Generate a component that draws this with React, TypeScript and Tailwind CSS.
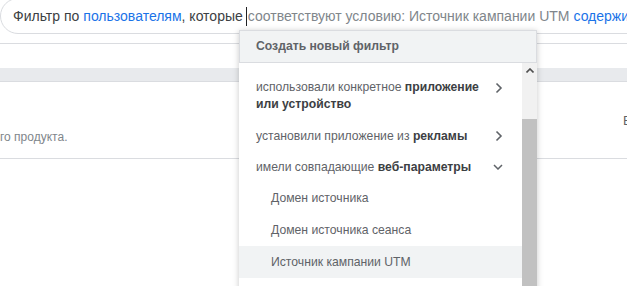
import React from "react";

function ChevronRight() {
  return (
    <svg width="8" height="12" viewBox="0 0 8 12" className="shrink-0">
      <path d="M1.5 1.5 L6 6 L1.5 10.5" fill="none" stroke="#5f6368" strokeWidth="1.6" />
    </svg>
  );
}

function ChevronDown() {
  return (
    <svg width="10" height="6" viewBox="0 0 10 6" className="shrink-0">
      <path d="M1 1 L5 5 L9 1" fill="none" stroke="#5f6368" strokeWidth="1.5" />
    </svg>
  );
}

function MenuItem({
  children,
  icon,
  indent,
  active,
  h = "h-8",
}: {
  children: React.ReactNode;
  icon?: React.ReactNode;
  indent?: boolean;
  active?: boolean;
  h?: string;
}) {
  return (
    <div
      className={`flex ${h} items-center justify-between pr-[19px] text-[12.2px] text-[#5f6368] ${
        indent ? "pl-[32px]" : "pl-[17px]"
      } ${active ? "bg-[#f1f3f4]" : ""}`}
    >
      <span>{children}</span>
      {icon}
    </div>
  );
}

export default function App() {
  return (
    <div
      className="relative h-[286px] w-[627px] overflow-hidden bg-white"
      style={{ fontFamily: '"Liberation Sans", Arial, sans-serif' }}
    >
      {/* search bar */}
      <div className="-mt-[2px] flex h-[36px] w-[760px] items-center whitespace-nowrap rounded-[18px] border border-[#dadce0] pl-[12px] text-[14px]">
        <span className="text-[#3c4043]">Фильтр по </span>
        <span className="ml-[4px] text-[#1a73e8]">пользователям</span>
        <span className="text-[#3c4043]">, которые </span>
        <span className="ml-[3px] mr-[1px] h-[19px] w-px bg-[#202124]" />
        <span className="text-[#80868b]">соответствуют условию: Источник кампании UTM </span>
        <span className="ml-[4px] text-[#1a73e8]">содержит</span>
      </div>

      <div className="mt-[9px] border-t border-[#dadce0]" />

      {/* grey band */}
      <div className="mt-[24px] h-[14px] border-b border-[#dadce0] bg-[#e8eaed]" />

      <div className="flex h-[77px] border-b border-[#dadce0] text-[12px]">
        <span className="pt-[46px] text-[#80868b]">го продукта.</span>
        <span className="ml-auto w-[4px] overflow-hidden pt-[29px] text-[13px] text-[#5f6368]">В</span>
      </div>

      {/* dropdown */}
      <div className="absolute left-[239px] top-[30px] h-[270px] w-[298px] bg-white shadow-[0_1px_6px_rgba(0,0,0,0.22)]">
        <div className="flex h-[33px] items-center border border-[#dadce0] bg-[#f1f3f4] pl-[16px] text-[12.2px] font-bold text-[#5f6368]">
          Создать новый фильтр
        </div>
        <div className="flex">
          <div className="w-[283px] pt-[8px]">
            <div className="flex justify-between pb-[7px] pl-[17px] pr-[19px] pt-[8px] text-[12.2px] leading-[17px] text-[#5f6368]">
              <span>
                использовали конкретное <b className="text-[#3c4043]">приложение</b>
                <br />
                <b className="text-[#3c4043]">или устройство</b>
              </span>
              <span className="pt-[3px]">
                <ChevronRight />
              </span>
            </div>
            <MenuItem icon={<ChevronRight />}>
              установили приложение из <b className="text-[#3c4043]">рекламы</b>
            </MenuItem>
            <MenuItem icon={<ChevronDown />} h="h-[30px]">
              имели совпадающие <b className="text-[#3c4043]">веб-параметры</b>
            </MenuItem>
            <MenuItem indent>Домен источника</MenuItem>
            <MenuItem indent>Домен источника сеанса</MenuItem>
            <MenuItem indent active>
              Источник кампании UTM
            </MenuItem>
            <MenuItem indent>Кампания UTM</MenuItem>
          </div>
          {/* scrollbar */}
          <div className="flex h-[240px] w-[15px] flex-col bg-[#f1f1f1]">
            <div className="flex h-[15px] items-center justify-center">
              <svg width="8" height="5" viewBox="0 0 8 5">
                <path d="M0.5 4.5 L4 1 L7.5 4.5" fill="none" stroke="#505050" strokeWidth="1.6" />
              </svg>
            </div>
            <div className="mt-[41px] flex-1 bg-[#c1c1c1]" />
          </div>
        </div>
      </div>
    </div>
  );
}
